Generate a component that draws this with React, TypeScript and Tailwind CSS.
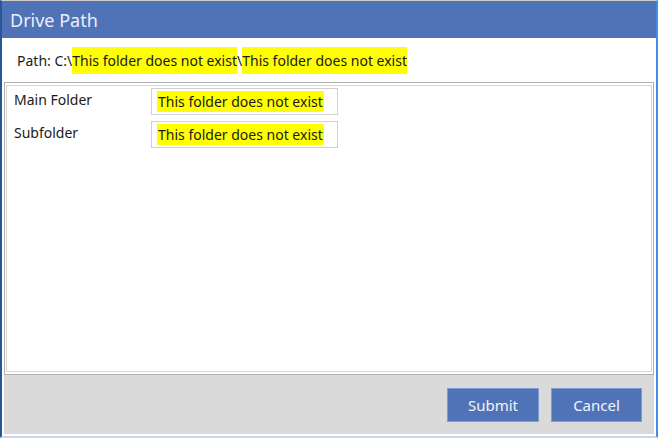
const FONT = "font-['Segoe_UI','Noto_Sans','Open_Sans',sans-serif]";

function Hi({ children }: { children: React.ReactNode }) {
  return <span className="bg-[#ffff00] py-[3px]">{children}</span>;
}

function FolderRow({ label, value }: { label: string; value: string }) {
  return (
    <div className="flex">
      <div className="w-[137px] pt-[2px] text-[14px] leading-[20px] text-[#1a1a1a]">{label}</div>
      <div className="flex h-[27px] w-[187px] items-center border border-[#d0d0d0] bg-white px-[5px]">
        <span className="bg-[#ffff00] px-[1px] py-[1px] text-[14px] leading-[19px] text-[#1a1a1a]">{value}</span>
      </div>
    </div>
  );
}

export default function App() {
  return (
    <div
      className={`${FONT} flex h-[438px] w-[658px] flex-col overflow-hidden border-t border-l-2 border-r-2 border-b-2 border-t-[#cfcfcf] border-l-[#2a5699] border-r-[#3d8fe3] border-b-[#c8d7ea] bg-white`}
    >
      <div className="flex h-[37px] shrink-0 items-center bg-[#5073b8] pl-[8px] pt-[2px] text-[18px] text-[#eaeff8]">
        Drive Path
      </div>

      <div className="flex flex-1 flex-col px-[2px]">
        <div className="flex h-[44px] shrink-0 items-center pl-[13px] text-[14px] text-[#1a1a1a]">
          <span>Path: C:\</span>
          <Hi>This folder does not exist</Hi>
          <span>\</span>
          <Hi>This folder does not exist</Hi>
        </div>

        <div className="flex h-[293px] shrink-0 flex-col border border-[#b0b0b0] px-px pt-[2px] pb-[2px]">
          <div className="flex flex-1 flex-col gap-[6px] border border-[#d6d6d6] pl-[7px] pt-[2px]">
            <FolderRow label="Main Folder" value="This folder does not exist" />
            <FolderRow label="Subfolder" value="This folder does not exist" />
          </div>
        </div>

        <div className="flex h-[59px] shrink-0 items-center justify-end gap-[12px] bg-[#dadada] pr-[12px] pt-[1px]">
          <button className="h-[34px] w-[92px] border border-[#7f9bd0] bg-[#5073b8] text-[15px] text-[#f2f5fb]">
            Submit
          </button>
          <button className="h-[34px] w-[91px] border border-[#7f9bd0] bg-[#5073b8] text-[15px] text-[#f2f5fb]">
            Cancel
          </button>
        </div>
        <div className="h-px shrink-0 bg-white" />
      </div>
    </div>
  );
}
